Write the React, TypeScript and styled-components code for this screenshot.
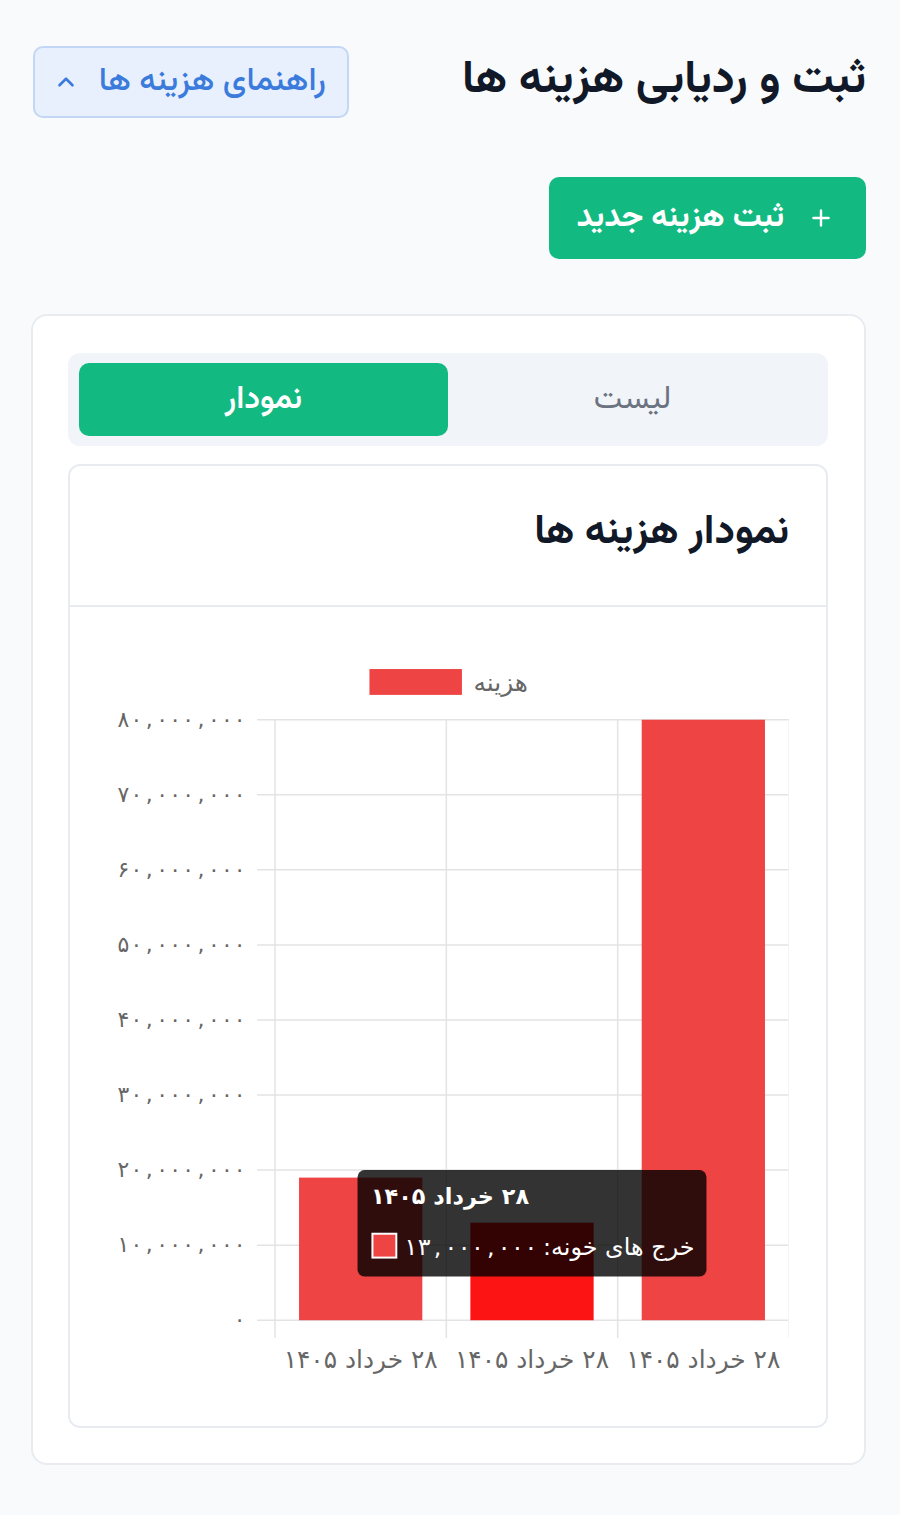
import React from "react";
import styled, { createGlobalStyle } from "styled-components";
import { ChevronUp, Plus } from "lucide-react";

const UI_FONT = `Vazirmatn, "DejaVu Sans", sans-serif`;
const CHART_FONT = `"DejaVu Sans", sans-serif`;

const GlobalStyle = createGlobalStyle`
  html, body { margin: 0; padding: 0; background: #f8fafc; }
  body { font-family: ${UI_FONT}; direction: rtl; }
  * { box-sizing: border-box; }
`;

const Page = styled.div`
  padding: 46px 34px 50px 31px;
  display: flex;
  flex-direction: column;
`;

const HeaderRow = styled.div`
  display: flex;
  align-items: center;
  justify-content: space-between;
  height: 72px;
  padding-left: 2px;
`;

const Title = styled.h1`
  margin: 0;
  font-size: 46px;
  font-weight: 700;
  color: #111827;
  line-height: 1.2;
`;

const GuideButton = styled.button`
  direction: rtl;
  display: flex;
  align-items: center;
  gap: 20px;
  height: 72px;
  width: 316px;
  padding: 0 21px 0 0;
  background: #e8f0fd;
  border: 2px solid #c3d6f5;
  border-radius: 10px;
  color: #3b7bdc;
  font-family: ${UI_FONT};
  font-size: 33px;
  font-weight: 500;
`;

const ActionRow = styled.div`
  display: flex;
  justify-content: flex-start;
  margin-top: 59px;
`;

const AddButton = styled.button`
  direction: rtl;
  display: flex;
  align-items: center;
  gap: 24px;
  height: 82px;
  width: 317px;
  padding: 0 32px 0 0;
  background: #12b981;
  border: none;
  border-radius: 10px;
  color: #ffffff;
  font-family: ${UI_FONT};
  font-size: 32px;
  font-weight: 700;
`;

const Card = styled.div`
  margin-top: 55px;
  background: #ffffff;
  border: 2px solid #e8ecf1;
  border-radius: 16px;
  padding: 37px 36px 35px 35px;
  display: flex;
  flex-direction: column;
  gap: 18px;
`;

const Tabs = styled.div`
  display: grid;
  grid-template-columns: 1fr 1fr;
  height: 93px;
  padding: 10px 11px;
  background: #f1f4f8;
  border-radius: 12px;
`;

const Tab = styled.div<{ $active?: boolean }>`
  display: flex;
  align-items: center;
  justify-content: center;
  border-radius: 10px;
  font-size: 32px;
  font-weight: ${(p) => (p.$active ? 600 : 400)};
  color: ${(p) => (p.$active ? "#ffffff" : "#6b7280")};
  background: ${(p) => (p.$active ? "#12b981" : "transparent")};
`;

const ChartCard = styled.div`
  background: #ffffff;
  border: 2px solid #e8ecf1;
  border-radius: 12px;
  display: flex;
  flex-direction: column;
`;

const ChartHeader = styled.div`
  height: 141px;
  display: flex;
  align-items: center;
  padding: 0 37px 4px;
  border-bottom: 2px solid #e8ecf1;
`;

const ChartTitle = styled.h2`
  margin: 0;
  font-size: 41px;
  font-weight: 700;
  color: #111827;
  line-height: 1.2;
`;

const ChartBody = styled.div`
  padding: 36px 37px 36px;
  display: flex;
  justify-content: center;
`;

const ChartSvg = styled.svg`
  direction: ltr;
  font-family: ${CHART_FONT};
`;

const AxisLabel = styled.text<{ $light?: boolean }>`
  font-size: 22px;
  fill: ${(p) => (p.$light ? "#fff" : "#666")};
  direction: ltr;
`;

const CategoryLabel = styled.text`
  font-size: 25px;
  fill: #666;
  direction: rtl;
  unicode-bidi: plaintext;
`;

const TipText = styled.text<{ $bold?: boolean }>`
  font-size: ${(p) => (p.$bold ? 22.5 : 24)}px;
  font-weight: ${(p) => (p.$bold ? 700 : 400)};
  fill: #fff;
  direction: rtl;
`;

const fa = (n: number) =>
  n
    .toLocaleString("en-US")
    .replace(/\d/g, (d) => "۰۱۲۳۴۵۶۷۸۹"[Number(d)]);

/* digit strings laid out at an even pitch, each glyph centred on its slot */
const SpacedNumber: React.FC<{
  text: string;
  x0: number;
  y: number;
  pitch: number;
  light?: boolean;
  fontSize?: number;
}> = ({ text, x0, y, pitch, light, fontSize }) => {
  const chars = Array.from(text);
  const xs = chars.map((_, k) => (x0 + pitch * (k + 0.5)).toFixed(1)).join(" ");
  return (
    <AxisLabel $light={light} x={xs} y={y} textAnchor="middle" style={fontSize ? { fontSize } : undefined}>
      {text}
    </AxisLabel>
  );
};

const values = [19000000, 13000000, 80000000];

const Chart: React.FC = () => {
  const W = 686;
  const H = 747;
  const left = 169;
  const right = 686;
  const top = 75;
  const bottom = 679;
  const max = 80000000;
  const catW = (right - left) / 3;
  const barW = 124;
  const step = (bottom - top) / 8;
  const ticks = Array.from({ length: 9 }, (_, i) => i);
  const y = (v: number) => bottom - (v / max) * (bottom - top);
  const pitch = 13;
  return (
    <ChartSvg width={W} height={H} viewBox={`0 0 ${W} ${H}`}>
      <rect x={264} y={24} width={93} height={26} fill="#ef4444" />
      <CategoryLabel x={396} y={46} textAnchor="middle">
        هزینه
      </CategoryLabel>
      {ticks.map((i) => (
        <line
          key={`h${i}`}
          x1={151}
          x2={right}
          y1={top + i * step}
          y2={top + i * step}
          stroke="#e3e3e3"
          strokeWidth={1.5}
        />
      ))}
      {[0, 1, 2, 3].map((i) => (
        <line
          key={`v${i}`}
          x1={left + i * catW}
          x2={left + i * catW}
          y1={top}
          y2={697}
          stroke={i === 3 ? "#f0f0f0" : "#e3e3e3"}
          strokeWidth={1.5}
        />
      ))}
      {ticks.map((i) => {
        const label = fa(max - i * 10000000);
        const n = Array.from(label).length;
        return (
          <SpacedNumber
            key={`yl${i}`}
            text={label}
            x0={140 - pitch * n}
            y={top + i * step + 7}
            pitch={pitch}
          />
        );
      })}
      {values.map((v, i) => {
        const cx = left + catW * (i + 0.5);
        return (
          <rect
            key={`b${i}`}
            x={cx - barW / 2}
            y={y(v)}
            width={barW}
            height={bottom - y(v)}
            fill={i === 1 ? "#fc1313" : "#ef4444"}
          />
        );
      })}
      {values.map((_, i) => (
        <CategoryLabel key={`xl${i}`} x={left + catW * (i + 0.5)} y={727} textAnchor="middle">
          ۲۸ خرداد ۱۴۰۵
        </CategoryLabel>
      ))}
      <rect x={252} y={528} width={351} height={107} rx={7} fill="rgba(0,0,0,0.8)" />
      <TipText $bold x={345} y={562} textAnchor="middle">
        ۲۸ خرداد ۱۴۰۵
      </TipText>
      <rect x={267} y={592} width={24} height={24} fill="#ef4444" stroke="#fff" strokeWidth={2} />
      <SpacedNumber text="۱۳,۰۰۰,۰۰۰" x0={299} y={613} pitch={13.4} light fontSize={24} />
      <TipText x={591} y={613} textAnchor="start">
        خرج های خونه:
      </TipText>
    </ChartSvg>
  );
};

export default function App() {
  return (
    <>
      <GlobalStyle />
      <Page>
        <HeaderRow>
          <Title>ثبت و ردیابی هزینه ها</Title>
          <GuideButton>
            <span>راهنمای هزینه ها</span>
            <ChevronUp size={26} strokeWidth={2.4} />
          </GuideButton>
        </HeaderRow>
        <ActionRow>
          <AddButton>
            <Plus size={26} strokeWidth={2.2} />
            <span>ثبت هزینه جدید</span>
          </AddButton>
        </ActionRow>
        <Card>
          <Tabs>
            <Tab>لیست</Tab>
            <Tab $active>نمودار</Tab>
          </Tabs>
          <ChartCard>
            <ChartHeader>
              <ChartTitle>نمودار هزینه ها</ChartTitle>
            </ChartHeader>
            <ChartBody>
              <Chart />
            </ChartBody>
          </ChartCard>
        </Card>
      </Page>
    </>
  );
}
